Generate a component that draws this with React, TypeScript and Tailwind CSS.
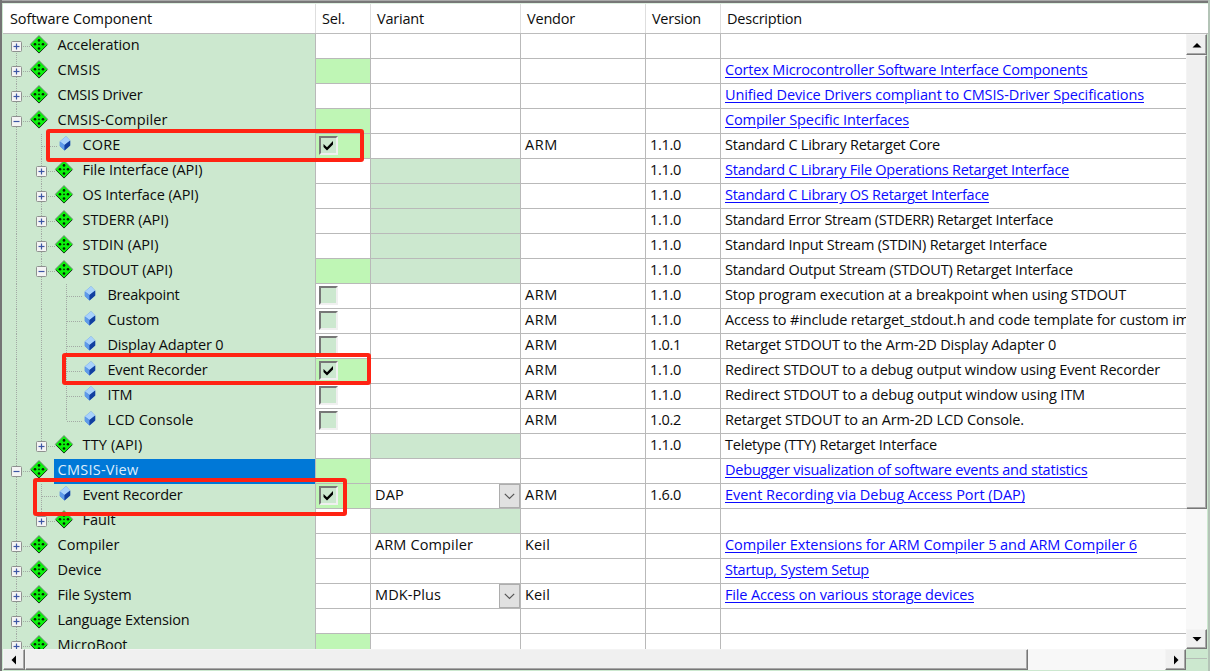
import { useLayoutEffect, useRef } from "react";

type Kind = "plus" | "minus" | "leaf";
type Row = {
  name: string;
  w: number;
  level: number;
  kind: Kind;
  sel?: boolean;
  check?: boolean | null;
  variant?: string;
  vw?: number;
  combo?: boolean;
  shade?: boolean;
  vendor?: string;
  version?: string;
  desc?: string;
  dw?: number;
  link?: boolean;
  active?: boolean;
  last?: boolean;
};

const rows: Row[] = [
  { name: "Acceleration", w: 82, level: 0, kind: "plus" },
  { name: "CMSIS", w: 43, level: 0, kind: "plus", sel: true, desc: "Cortex Microcontroller Software Interface Components", dw: 362.5, link: true },
  { name: "CMSIS Driver", w: 85, level: 0, kind: "plus", desc: "Unified Device Drivers compliant to CMSIS-Driver Specifications", dw: 419, link: true },
  { name: "CMSIS-Compiler", w: 110, level: 0, kind: "minus", sel: true, desc: "Compiler Specific Interfaces", dw: 184, link: true },
  { name: "CORE", w: 38, level: 1, kind: "leaf", sel: true, check: true, vendor: "ARM", version: "1.1.0", desc: "Standard C Library Retarget Core", dw: 215 },
  { name: "File Interface (API)", w: 120, level: 1, kind: "plus", shade: true, version: "1.1.0", desc: "Standard C Library File Operations Retarget Interface", dw: 344, link: true },
  { name: "OS Interface (API)", w: 116, level: 1, kind: "plus", shade: true, version: "1.1.0", desc: "Standard C Library OS Retarget Interface", dw: 264, link: true },
  { name: "STDERR (API)", w: 86, level: 1, kind: "plus", shade: true, version: "1.1.0", desc: "Standard Error Stream (STDERR) Retarget Interface", dw: 328 },
  { name: "STDIN (API)", w: 76, level: 1, kind: "plus", shade: true, version: "1.1.0", desc: "Standard Input Stream (STDIN) Retarget Interface", dw: 322 },
  { name: "STDOUT (API)", w: 90, level: 1, kind: "minus", sel: true, shade: true, version: "1.1.0", desc: "Standard Output Stream (STDOUT) Retarget Interface", dw: 348 },
  { name: "Breakpoint", w: 72, level: 2, kind: "leaf", check: false, vendor: "ARM", version: "1.1.0", desc: "Stop program execution at a breakpoint when using STDOUT", dw: 401 },
  { name: "Custom", w: 52, level: 2, kind: "leaf", check: false, vendor: "ARM", version: "1.1.0", desc: "Access to #include retarget_stdout.h and code template for custom implementation", dw: 553 },
  { name: "Display Adapter 0", w: 116, level: 2, kind: "leaf", check: false, vendor: "ARM", version: "1.0.1", desc: "Retarget STDOUT to the Arm-2D Display Adapter 0", dw: 331 },
  { name: "Event Recorder", w: 100, level: 2, kind: "leaf", sel: true, check: true, vendor: "ARM", version: "1.1.0", desc: "Redirect STDOUT to a debug output window using Event Recorder", dw: 435 },
  { name: "ITM", w: 25, level: 2, kind: "leaf", check: false, vendor: "ARM", version: "1.1.0", desc: "Redirect STDOUT to a debug output window using ITM", dw: 360 },
  { name: "LCD Console", w: 86, level: 2, kind: "leaf", check: false, vendor: "ARM", version: "1.0.2", desc: "Retarget STDOUT to an Arm-2D LCD Console.", dw: 299, last: true },
  { name: "TTY (API)", w: 60, level: 1, kind: "plus", shade: true, version: "1.1.0", desc: "Teletype (TTY) Retarget Interface", dw: 212, last: true },
  { name: "CMSIS-View", w: 81, level: 0, kind: "minus", sel: true, active: true, desc: "Debugger visualization of software events and statistics", dw: 362.5, link: true },
  { name: "Event Recorder", w: 100, level: 1, kind: "leaf", sel: true, check: true, variant: "DAP", vw: 29, combo: true, vendor: "ARM", version: "1.6.0", desc: "Event Recording via Debug Access Port (DAP)", dw: 300, link: true },
  { name: "Fault", w: 33, level: 1, kind: "plus", shade: true, last: true },
  { name: "Compiler", w: 62, level: 0, kind: "plus", variant: "ARM Compiler", vw: 98, vendor: "Keil", desc: "Compiler Extensions for ARM Compiler 5 and ARM Compiler 6", dw: 412, link: true },
  { name: "Device", w: 44, level: 0, kind: "plus", desc: "Startup, System Setup", dw: 144, link: true },
  { name: "File System", w: 74, level: 0, kind: "plus", variant: "MDK-Plus", vw: 66, combo: true, vendor: "Keil", desc: "File Access on various storage devices", dw: 249, link: true },
  { name: "Language Extension", w: 132, level: 0, kind: "plus" },
  { name: "MicroBoot", w: 70, level: 0, kind: "plus", sel: true },
];

/* Label whose tracking is adjusted so that it fills the given width. */
function Label({ text, width, className = "" }: { text: string; width: number; className?: string }) {
  const ref = useRef<HTMLSpanElement>(null);
  useLayoutEffect(() => {
    const el = ref.current;
    if (!el) return;
    el.style.letterSpacing = "0px";
    const natural = el.getBoundingClientRect().width;
    el.style.letterSpacing = `${(width - natural) / text.length}px`;
  }, [text, width]);
  return (
    <span ref={ref} className={`inline-block shrink-0 whitespace-pre ${className}`}>
      {text}
    </span>
  );
}

const dots = { stroke: "#a3aaa5", strokeWidth: 1, strokeDasharray: "1 1" };

function Toggle({ x, minus }: { x: number; minus: boolean }) {
  return (
    <g transform={`translate(${x} 12)`}>
      <rect x="-5" y="-4.5" width="10" height="10" rx="1" fill="#f4f4f4" stroke="#8e918f" />
      <path d="M-3 .5H3" stroke="#3c56a5" strokeWidth="1.2" />
      {!minus && <path d="M0 -2.5V3.5" stroke="#3c56a5" strokeWidth="1.2" />}
    </g>
  );
}

function Diamond({ x }: { x: number }) {
  return (
    <g transform={`translate(${x} 10.3)`}>
      <path d="M0 -8.7L8.7 0L0 8.7L-8.7 0Z" fill="#0cf20c" stroke="#75887a" strokeWidth="1" />
      <path d="M-8 .8L0 8.8L8 .8" fill="none" stroke="#123c14" strokeWidth="1" />
      <g fill="#042004">
        <circle cx="0" cy="-3.9" r="1.3" />
        <circle cx="-4" cy="0" r="1.3" />
        <circle cx="4" cy="0" r="1.3" />
        <circle cx="0" cy="4.2" r="1.3" />
        <circle cx="0" cy="0" r=".9" />
      </g>
    </g>
  );
}

function Leaf({ x }: { x: number }) {
  return (
    <g transform={`translate(${x} 9.5)`}>
      <path d="M1 -7.3L5.2 -3V2L-.5 7L-5.2 2.5V-2Z" fill="#3f7ddb" />
      <path d="M1 -7.3L5.2 -3L-.5 1.6L-5.2 -2Z" fill="#a9d2fb" />
      <path d="M-5.2 -2L-.5 1.6V7L-5.2 2.5Z" fill="#5f9bea" />
      <path d="M5.2 -3V2L-.5 7V1.6Z" fill="#123f9f" />
    </g>
  );
}

function Gutter({ row, index }: { row: Row; index: number }) {
  const lx = row.level * 25;
  const width = 51 + lx;
  const leaf = row.kind === "leaf";
  return (
    <svg width={width} height="25" viewBox={`0 0 ${width} 25`} className="shrink-0">
      <path d={index === 0 ? "M13.5 13V25" : "M13.5 0V25"} {...dots} />
      {row.level >= 1 && <path d={row.level === 1 && row.last ? "M38.5 0V12" : "M38.5 0V25"} {...dots} />}
      {row.level === 2 && <path d={row.last ? "M63.5 0V12" : "M63.5 0V25"} {...dots} />}
      {leaf ? <path d={`M${14 + lx} 12.5H${29 + lx}`} {...dots} /> : <path d={`M${20 + lx} 12.5H${27 + lx}`} {...dots} />}
      {leaf ? <Leaf x={37 + lx} /> : <Diamond x={36 + lx} />}
      {!leaf && <Toggle x={13.5 + lx} minus={row.kind === "minus"} />}
    </svg>
  );
}

function Check({ on }: { on: boolean }) {
  return (
    <span className="ml-[3px] flex h-[19px] w-[19px] items-center justify-center border-2 border-t-[#777] border-l-[#777] border-r-[#f0f0f0] border-b-[#f0f0f0] bg-[#cce8cf]">
      {on && (
        <svg width="13" height="13" viewBox="0 0 13 13">
          <path d="M1.5 5L5 8.3L11 2V5.5L5 11.5L1.5 8Z" fill="#000" />
        </svg>
      )}
    </span>
  );
}

function Line({ row, index }: { row: Row; index: number }) {
  const cell = "flex h-full shrink-0 items-center border-r border-b border-[#b9b9b9] pb-0.5";
  return (
    <div className="flex h-[25px] shrink-0">
      <div className="flex h-full w-[313px] shrink-0 items-center border-r border-[#b9b9b9] bg-[#cce8cf]">
        <Gutter row={row} index={index} />
        <div className={`flex h-full grow items-center pb-[3px] pl-[3.5px] ${row.active ? "bg-[#0078d7] text-[#dcedfb]" : ""}`}>
          <Label text={row.name} width={row.w} />
        </div>
      </div>
      <div className={`${cell} w-[55px] ${row.sel ? "bg-[#bff6b5]" : "bg-white"}`}>
        {row.check != null && <Check on={row.check} />}
      </div>
      <div className={`${cell} w-[150px] justify-between pl-1 ${row.shade ? "bg-[#cce8cf]" : "bg-white"}`}>
        {row.variant && <Label text={row.variant} width={row.vw ?? 60} />}
        {row.combo && (
          <span className="-mb-0.5 flex h-6 w-[21px] items-center justify-center border border-[#adadad] bg-[#e1e1e1]">
            <svg width="11" height="7" viewBox="0 0 11 7">
              <path d="M.8 .8L5.5 5.5L10.2 .8" fill="none" stroke="#555" strokeWidth="1.2" />
            </svg>
          </span>
        )}
      </div>
      <div className={`${cell} w-[125px] bg-white pl-1`}>
        {row.vendor && <Label text={row.vendor} width={row.vendor === "ARM" ? 33 : 25} />}
      </div>
      <div className={`${cell} w-[75px] bg-white pl-1`}>{row.version && <Label text={row.version} width={31} />}</div>
      <div className="flex h-full w-[465px] shrink-0 items-center overflow-hidden border-b border-[#b9b9b9] bg-white pb-0.5 pl-1">
        {row.desc && (
          <Label
            text={row.desc}
            width={row.dw ?? 200}
            className={row.link ? "text-[#0a0aff] underline decoration-1 underline-offset-2" : ""}
          />
        )}
      </div>
    </div>
  );
}

const raised = "border border-t-[#f4f4f4] border-l-[#f4f4f4] border-r-[#777] border-b-[#777] bg-[#f0f0f0] shadow-[inset_-1px_-1px_0_#a8a8a8]";

function Arrow({ d }: { d: string }) {
  return (
    <svg width="12" height="12" viewBox="0 0 12 12">
      <path d={d} fill="#000" />
    </svg>
  );
}

const headers = [
  { text: "Software Component", width: 142, cls: "w-[313px] pl-[7px]" },
  { text: "Sel.", width: 23, cls: "w-[55px] pl-1.5" },
  { text: "Variant", width: 47, cls: "w-[150px] pl-1.5" },
  { text: "Vendor", width: 48, cls: "w-[125px] pl-1.5" },
  { text: "Version", width: 49, cls: "w-[75px] pl-1.5" },
];

export default function App() {
  return (
    <div className="relative flex h-[671px] w-[1210px] flex-col overflow-hidden border-r-2 border-l-2 border-r-[#b4c4b7] border-l-[#747474] bg-[#cce8cf] pl-px font-['Open_Sans','Noto_Sans',sans-serif] text-[14.5px] leading-5 text-[#0c0c0c] [font-stretch:88%]">
      <div className="-ml-[3px] h-[3px] w-[1210px] shrink-0 border-t border-t-[#a9a9a9] bg-[#777]" />
      <div className="flex h-[31px] w-[1205px] shrink-0 border-t border-b border-t-[#dff1e1] border-b-[#bcbcbc] bg-white">
        {headers.map((h) => (
          <div key={h.text} className={`flex shrink-0 items-center border-r border-[#dedede] pt-px ${h.cls}`}>
            <Label text={h.text} width={h.width} />
          </div>
        ))}
        <div className="flex items-center pt-px pl-1.5">
          <Label text="Description" width={75} />
        </div>
      </div>
      <div className="flex h-[615px] shrink-0">
        <div className="flex w-[1183px] shrink-0 flex-col overflow-hidden">
          {rows.map((row, i) => (
            <Line key={i} row={row} index={i} />
          ))}
        </div>
        <div className="flex w-[21px] shrink-0 flex-col bg-[#f8f8f8]">
          <div className={`flex h-[21px] items-center justify-center ${raised}`}>
            <Arrow d="M1.5 8.5H10.5L6 4Z" />
          </div>
          <div className={`h-[454px] ${raised}`} />
          <div className="grow" />
          <div className={`flex h-5 items-center justify-center ${raised}`}>
            <Arrow d="M1.5 4H10.5L6 8.5Z" />
          </div>
        </div>
      </div>
      <div className="flex h-[21px] shrink-0">
        <div className="flex w-[1183px] shrink-0 bg-[#f8f8f8]">
          <div className={`flex w-[22px] items-center justify-center ${raised}`}>
            <Arrow d="M8 1.5V10.5L3.5 6Z" />
          </div>
          <div className={`w-[1003px] ${raised}`} />
          <div className="grow" />
          <div className={`flex w-[21px] items-center justify-center ${raised}`}>
            <Arrow d="M4 1.5V10.5L8.5 6Z" />
          </div>
        </div>
        <div className="mt-[9px] h-px w-[21px] bg-[#b5bdb6]" />
      </div>
      <div className="absolute top-[129px] left-[44px] h-[33px] w-[318px] rounded-[3px] border-4 border-[#ff2313]" />
      <div className="absolute top-[353px] left-[60px] h-[32px] w-[309px] rounded-[3px] border-4 border-[#ff2313]" />
      <div className="absolute top-[478px] left-[31px] h-[38px] w-[314px] rounded-[3px] border-4 border-[#ff2313]" />
    </div>
  );
}
